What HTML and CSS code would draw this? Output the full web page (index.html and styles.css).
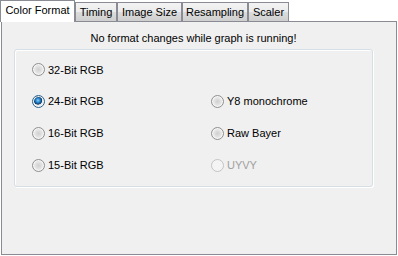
FILE: index.html
```html
<!DOCTYPE html>
<html>
<head>
<meta charset="utf-8">
<link rel="stylesheet" href="styles.css">
</head>
<body>
<div class="win">
  <div class="tabs">
    <div class="tab sel w-color">Color Format</div>
    <div class="tab w-timing">Timing</div>
    <div class="tab w-size">Image Size</div>
    <div class="tab w-resamp">Resampling</div>
    <div class="tab w-scaler">Scaler</div>
  </div>
  <div class="panel">
    <p class="msg">No format changes while graph is running!</p>
    <div class="group">
      <label class="opt"><span class="radio"></span>32-Bit RGB</label>
      <span></span>
      <label class="opt"><span class="radio checked"></span>24-Bit RGB</label>
      <label class="opt"><span class="radio"></span>Y8 monochrome</label>
      <label class="opt"><span class="radio"></span>16-Bit RGB</label>
      <label class="opt"><span class="radio"></span>Raw Bayer</label>
      <label class="opt"><span class="radio"></span>15-Bit RGB</label>
      <label class="opt disabled"><span class="radio"></span>UYVY</label>
    </div>
  </div>
</div>
</body>
</html>
```
FILE: styles.css
```css
html, body {
  margin: 0;
  padding: 0;
  background: #ffffff;
}
body {
  font-family: "Liberation Sans", Arial, sans-serif;
  font-size: 11px;
  color: #000;
}
.win {
  width: 398px;
  height: 256px;
  padding-left: 1px;
  box-sizing: border-box;
}
.tabs {
  display: flex;
  align-items: flex-end;
  height: 21px;
  position: relative;
  z-index: 2;
  margin-left: -1px;
}
.tab {
  box-sizing: border-box;
  height: 19px;
  border: 1px solid #898c95;
  border-bottom: none;
  background: linear-gradient(#f3f3f3, #ebebeb 50%, #dcdcdc 51%, #cfcfcf);
  display: flex;
  align-items: center;
  justify-content: center;
  padding-top: 1px;
  line-height: 1;
  white-space: nowrap;
}
.tab.sel {
  height: 22px;
  margin-bottom: -1px;
  background: #ffffff;
  padding: 0 0 2px;
}
.w-color { width: 75px; }
.w-timing { width: 42px; }
.w-size { width: 65px; }
.w-resamp { width: 66px; }
.w-scaler { width: 41px; }
.panel {
  box-sizing: border-box;
  width: 396px;
  height: 234px;
  border: 1px solid #898c95;
  background: #f0f0f0;
  padding: 0 0 0 12px;
}
.msg {
  margin: 0;
  padding: 10px 0 0 0;
  height: 17px;
  width: 359px;
  text-align: center;
  line-height: 13px;
}
.group {
  box-sizing: border-box;
  width: 359px;
  height: 138px;
  border: 1px solid #d5dfe5;
  border-radius: 3px;
  box-shadow: inset 1px 1px 0 #ffffff, 1px 1px 0 #ffffff;
  display: grid;
  grid-template-columns: 179px 1fr;
  grid-template-rows: 31px 32px 32px 32px;
  padding: 4px 0 0 17px;
}
.opt {
  display: flex;
  align-items: center;
  gap: 3px;
  white-space: nowrap;
}
.opt.disabled { color: #a0a0a0; }
.radio {
  box-sizing: border-box;
  width: 13px;
  height: 13px;
  border-radius: 50%;
  border: 1px solid #8e8f8f;
  background: radial-gradient(circle at 50% 50%, #cfcfcf 0, #e4e4e4 45%, #f7f7f7 100%);
  box-shadow: inset 0 0 0 1px #f6f6f6;
  flex: none;
}
.radio.checked {
  border-color: #2c628b;
  background: radial-gradient(circle at 45% 40%, #8dd3f7 0, #2a8ad4 22%, #0d3a6a 44%, #e6e6e6 50%, #f4f4f4 100%);
}
.opt.disabled .radio {
  border-color: #c4c4c4;
  background: #f4f4f4;
  box-shadow: none;
}
```
